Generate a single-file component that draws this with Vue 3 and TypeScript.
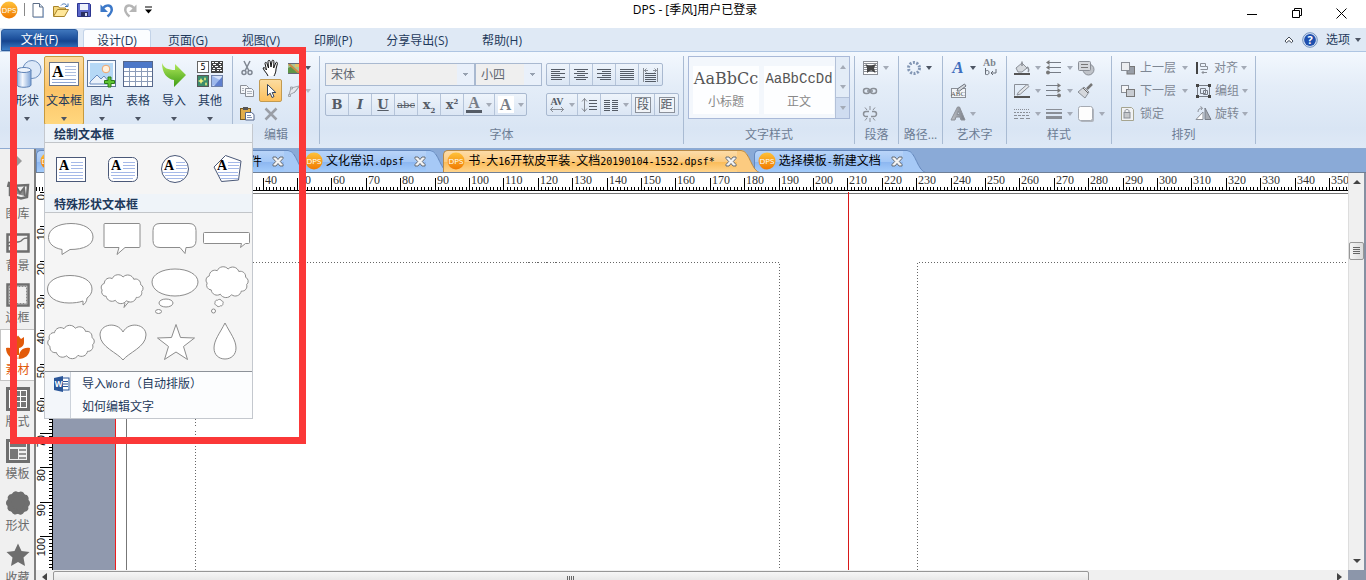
<script setup lang="ts">
import { computed, h, onBeforeUnmount, onMounted, ref } from 'vue'

interface Glyph { w: number; h: number; m: string }

const G = '#8a8f97'
const D = '#555c66'

const textPage = (x: number, y: number) =>
  `<text x="${x}" y="${y}" font-family="Liberation Serif, serif" font-weight="bold" font-size="14" fill="#000">A</text>`

const glyphs: Record<string, Glyph> = {
  dps: { w: 18, h: 18, m: `<defs><linearGradient id="dpsg" x1="0" y1="0" x2="0" y2="1"><stop offset="0" stop-color="#ffc23a"/><stop offset="1" stop-color="#f07a00"/></linearGradient></defs><circle cx="9" cy="9" r="8.500" fill="url(#dpsg)"/><text x="9" y="12" text-anchor="middle" font-family="Open Sans, sans-serif" font-size="8" fill="#fff">DPS</text>` },
  newdoc: { w: 16, h: 16, m: `<path d="M3 1.500h6.500l3.500 3.500v10H3z" fill="#fff" stroke="#5b6c86"/><path d="M9.500 1.500V5H13" fill="#dbe6f3" stroke="#5b6c86"/><path d="M13.500 6v9.500H4" fill="none" stroke="#8fa6c6"/>` },
  open: { w: 18, h: 16, m: `<path d="M1.500 14V4.500h5l1 1.500h6v2" fill="#f5d77a" stroke="#a8842a"/><path d="M1.500 14.500l4-7h11l-4 7z" fill="#ffe79a" stroke="#a8842a"/><path d="M9 3.500c2-2.500 5-2 6 .5M13 4.500h3V1.500" fill="none" stroke="#4778b8"/>` },
  save: { w: 16, h: 16, m: `<path d="M1.500 1.500h12l1 1v12h-13z" fill="#5a66c8" stroke="#2b3590"/><rect x="4" y="2" width="8" height="6" fill="#eef2fb"/><rect x="5" y="10" width="7" height="4.500" fill="#2b3060"/><rect x="9" y="11" width="2" height="3" fill="#d5dcf5"/>` },
  undo: { w: 16, h: 16, m: `<path d="M3 8C5 3 11 2 12.500 6c1 3-1 6-4 8.500" fill="none" stroke="#3c78c8" stroke-width="2.500"/><path d="M1.500 2.500V10H9z" fill="#3c78c8"/>` },
  redo: { w: 16, h: 16, m: `<path d="M13 8C11 3 5 2 3.500 6c-1 3 1 6 4 8.500" fill="none" stroke="#b5b5b5" stroke-width="2.500"/><path d="M14.500 2.500V10H7z" fill="#b5b5b5"/>` },
  custom: { w: 9, h: 8, m: `<path d="M1 1h7" stroke="#000"/><path d="M1 3.500h7L4.500 7.500z" fill="#000"/>` },
  min: { w: 10, h: 10, m: `<path d="M0 6.500h10" stroke="#000"/>` },
  restore: { w: 10, h: 10, m: `<path d="M.5 2.500h7v7h-7zM2.500 2V.5h7v7H8" fill="none" stroke="#000"/>` },
  close: { w: 11, h: 11, m: `<path d="M.5.5l10 10M10.500.5l-10 10" stroke="#000"/>` },
  fold: { w: 10, h: 8, m: `<path d="M1 5l4-4 4 4-1.500 1.700L5 4.500 2.500 6.700z" fill="#fff" stroke="#444c58"/>` },
  help: { w: 16, h: 16, m: `<circle cx="8" cy="8" r="7.300" fill="#dbe6f5" stroke="#6f8fbe"/><circle cx="8" cy="8" r="5.900" fill="#1f4fae"/><text x="8" y="12" text-anchor="middle" font-family="Open Sans, sans-serif" font-weight="bold" font-size="11" fill="#fff">?</text>` },
  shapes: { w: 30, h: 30, m: `<defs><linearGradient id="cylg"><stop offset="0" stop-color="#8fb2e0"/><stop offset=".4" stop-color="#f4f8fe"/><stop offset="1" stop-color="#7da3d6"/></linearGradient></defs><circle cx="20" cy="10.500" r="9" fill="#dbe8f8" stroke="#6d8fbe"/><path d="M5 11v15c0 3 14 3 14 0V11z" fill="url(#cylg)" stroke="#5f83b6"/><ellipse cx="12" cy="11" rx="7" ry="2.500" fill="#eef4fc" stroke="#5f83b6"/>` },
  textbox: { w: 32, h: 28, m: `<rect x="1.500" y="2.500" width="29" height="23" fill="#fff" stroke="#6b7486"/><text x="4" y="17" font-family="Liberation Serif, serif" font-weight="bold" font-size="16">A</text><path d="M17 6.500h11M17 9.500h11M17 12.500h11M17 15.500h11" stroke="#aebfe0"/><path d="M4 19.500h24M4 22.500h24" stroke="#8fa6d2"/>` },
  picture: { w: 32, h: 30, m: `<rect x="1.500" y="1.500" width="28" height="26" fill="#f7fafe" stroke="#5d7396"/><rect x="4" y="4" width="23" height="21" fill="#b5d8f6"/><circle cx="20" cy="10" r="3.800" fill="#fff1de" stroke="#efa56c"/><path d="M4 23l7-7 4 4 3-3 6 7v1H4z" fill="#eaf1fa" stroke="#6a8cc0"/><path d="M22 18h3v3.500h3.500v3H25V28h-3v-3.500h-3.500v-3H22z" fill="#5ec432" stroke="#2b7a18"/>` },
  table: { w: 32, h: 30, m: `<rect x="1.500" y="2.500" width="29" height="25" fill="#fff" stroke="#56678a"/><rect x="2" y="3" width="28" height="6" fill="#4d78c8"/><path d="M2 12.500h28M2 17.500h28M2 22.500h28M7.500 9v18M13.500 9v18M19.500 9v18M25.500 9v18" stroke="#8c9cb8"/>` },
  import: { w: 30, h: 30, m: `<defs><linearGradient id="impg" x1="0" y1="0" x2="0" y2="1"><stop offset="0" stop-color="#b4ea5c"/><stop offset="1" stop-color="#3c9c14"/></linearGradient></defs><path d="M3 4c2 5 6 7 13 7V5l11 11-12 12v-7C8 20 3 14 3 4z" fill="url(#impg)"/>` },
  other: { w: 28, h: 30, m: `<rect x="1.500" y="2.500" width="11" height="11" fill="#fff" stroke="#666"/><text x="7" y="11" text-anchor="middle" font-family="DejaVu Sans, sans-serif" font-size="8">5</text><rect x="15" y="2" width="12" height="12" fill="#444"/><path d="M16 3.500h2m1 0h3m2 0h2M17 5.500h3m3 0h2M16 7.500h1m2 0h3m2 0h2M17 9.500h2m2 0h4M16 11.500h3m2 0h2m1 0h2" stroke="#fff"/><rect x="1.500" y="16.500" width="11" height="11" fill="#3c8c6c" stroke="#555"/><path d="M4 21l1-2 1 2 2 1-2 1-1 2-1-2-2-1zM9 18l1 2-1 2-1-2zM10 23l1 2-1 2-1-2z" fill="#f3ef7a"/><rect x="15.500" y="16.500" width="11" height="11" fill="#d5e2fa" stroke="#7082a8"/><path d="M16 17l10 5-10 5z" fill="#9db8ec"/><path d="M26 18v9h-8z" fill="#5f7fce"/>` },
  cut: { w: 14, h: 16, m: `<path d="M4 1l5 10M10 1L5 11" stroke="#7f8792" stroke-width="1.500"/><circle cx="4" cy="12.500" r="2" fill="none" stroke="#7f8792" stroke-width="1.500"/><circle cx="10" cy="12.500" r="2" fill="none" stroke="#7f8792" stroke-width="1.500"/>` },
  hand: { w: 18, h: 18, m: `<path d="M6 17c-1-3-4-5-5-8 1-1 2 0 3.500 2L3 4.500C3 3 4.500 3 5 4.500L6.500 9 6 2.500C6 1 8 1 8.200 2.500L9 8l1-6c.3-1.300 2-1 1.900.5L11.700 9l2-5c.5-1.300 2-.8 1.700.6L14 10c0 3-1 5-2 7" fill="#fff" stroke="#111"/>` },
  stamp: { w: 14, h: 14, m: `<rect x="1" y="2" width="12" height="10" fill="#a7c596"/><path d="M1 12V7l4-2 4 4 4 3z" fill="#5e9648"/><path d="M2 3l10 9" stroke="#c98a45" stroke-width="2"/><rect x="8" y="3" width="4" height="3" fill="#e0c064"/><path d="M1 2.500h12M1 12.500h12" stroke="#667"/>` },
  copy: { w: 16, h: 14, m: `<path d="M1.500 1.500h6l2 2v6h-8z" fill="#f5f7fa" stroke="${G}"/><path d="M6.500 4.500h6l2 2v6h-8z" fill="#f5f7fa" stroke="${G}"/><path d="M8 7.500h5M8 9.500h5M3 4.500h2M3 6.500h2" stroke="#b0b5bd"/>` },
  cursor: { w: 14, h: 16, m: `<path d="M3.500 1.500v11l2.700-2.300 1.800 4.300 2-.9-1.800-4.100h3.600z" fill="#fff" stroke="#33445e"/>` },
  nodes: { w: 14, h: 14, m: `<path d="M2 11l2-7 8-2-4 6z" fill="#e6e9ee" stroke="#a0a5ad"/><path d="M1.500 12.500h2v-2h-2zM3.500 5h2V3h-2zM7 9l5-6" fill="#d5d9df" stroke="#a0a5ad"/>` },
  paste: { w: 16, h: 15, m: `<rect x="1.500" y="2.500" width="10" height="11" fill="#e0ad4c" stroke="#7a5c22"/><rect x="4" y="1" width="5" height="3" fill="#555"/><path d="M6.500 6.500h6l2.500 2v5.500H6.500z" fill="#fff" stroke="#53658a"/><path d="M8 9.500h4M8 11.500h5" stroke="#7a8cb0"/>` },
  del: { w: 14, h: 14, m: `<path d="M1.500 1.500l11 11M12.500 1.500l-11 11" stroke="#9a9ea6" stroke-width="2.500"/>` },
  al: { w: 17, h: 14, m: `<path d="M1 1.500h14M1 3.500h9M1 5.500h14M1 7.500h9M1 9.500h14M1 11.500h11" stroke="${D}"/>` },
  ac: { w: 17, h: 14, m: `<path d="M1 1.500h14M4 3.500h8M1 5.500h14M4 7.500h8M1 9.500h14M3 11.500h10" stroke="${D}"/>` },
  ar: { w: 17, h: 14, m: `<path d="M1 1.500h14M6 3.500h9M1 5.500h14M6 7.500h9M1 9.500h14M4 11.500h11" stroke="${D}"/>` },
  aj: { w: 17, h: 14, m: `<path d="M1 1.500h14M1 3.500h14M1 5.500h14M1 7.500h14M1 9.500h14M1 11.500h14" stroke="${D}"/>` },
  ad: { w: 17, h: 16, m: `<path d="M3 6.500h11M3 8.500h11M3 10.500h11M3 12.500h11M3 14.500h11" stroke="${D}"/><path d="M1.500 1v14M15.500 1v14M2 3.500h4M11 3.500h4M4.500 1.500l-2 2 2 2M12.500 1.500l2 2-2 2" fill="none" stroke="${G}"/>` },
  av: { w: 16, h: 16, m: `<text x="8" y="8" text-anchor="middle" font-family="Liberation Serif, serif" font-weight="bold" font-size="10" fill="${D}">AV</text><path d="M1 12.500h14M4 10l-2.500 2.500L4 15M12 10l2.500 2.500L12 15" fill="none" stroke="${G}"/>` },
  ls: { w: 17, h: 16, m: `<path d="M8 3.500h8M8 6.500h8M8 9.500h8M8 12.500h8" stroke="${D}"/><path d="M3.500 1v14M1 4.500L3.500 1.500 6 4.500M1 11.500L3.500 14.500 6 11.500" fill="none" stroke="${G}"/>` },
  cols: { w: 16, h: 14, m: `<path d="M1 2.500h6M9 2.500h6M1 4.500h6M9 4.500h6M1 6.500h6M9 6.500h6M1 8.500h6M9 8.500h6M1 10.500h6M9 10.500h6M1 12.500h6M9 12.500h6" stroke="${D}"/>` },
  wrap: { w: 17, h: 16, m: `<rect x="1" y="1" width="15" height="14" fill="#fff"/><path d="M1 1.500h15M1 3.500h15M1 5.500h15M1 7.500h15M1 9.500h15M1 11.500h15M1 14.500h15M1.500 1v14M15.500 1v14" stroke="#8b8f96"/><path d="M3.500 4l3 1.500h3L14 4l-2 4 1.500 5-4-2.500-2 .5L5 13V8z" fill="#444"/>` },
  link: { w: 16, h: 10, m: `<rect x="1.500" y="2.500" width="6" height="5" rx="2.500" fill="none" stroke="${G}" stroke-width="1.500"/><rect x="8.500" y="2.500" width="6" height="5" rx="2.500" fill="none" stroke="${G}" stroke-width="1.500"/><path d="M5 5h6" stroke="${G}" stroke-width="1.500"/>` },
  unlink: { w: 16, h: 16, m: `<path d="M7 5.500H4a2.500 2.500 0 0 0 0 5h2M9 10.500h3a2.500 2.500 0 0 0 0-5h-2" fill="none" stroke="${G}" stroke-width="1.500"/><path d="M3 1.500l2 2.500M8 0v4M13 1.500L11 4M3 14.500l2-2.500M8 16v-4M13 14.500L11 12" fill="none" stroke="${G}"/>` },
  path: { w: 16, h: 16, m: `<circle cx="8" cy="8" r="5.500" fill="none" stroke="#8296b4" stroke-width="3" stroke-dasharray="2 1.450"/>` },
  artA: { w: 16, h: 16, m: `<text x="8" y="13" text-anchor="middle" font-family="Liberation Serif, serif" font-weight="bold" font-style="italic" font-size="17" fill="#3f6fbe">A</text>` },
  ab: { w: 16, h: 18, m: `<text x="1" y="7" font-family="Liberation Serif, serif" font-weight="bold" font-size="10" fill="#7c828c">Ab</text><path d="M3.500 9v6.500M3.500 12.500c1-1.500 3.500-1.500 3.500 1s-2.500 2.500-3.500 1.500M14 10v4H9M11 12l-2 2 2 2" fill="none" stroke="#666c76"/>` },
  abc: { w: 18, h: 16, m: `<rect x="1.500" y="5.500" width="14" height="9" fill="#f2f4f7" stroke="${G}"/><text x="8" y="13" text-anchor="middle" font-family="Liberation Serif, serif" font-size="7" fill="#555">ABC</text><path d="M7 8l1-2.500L14.500 1l1.500 2-6.500 5z" fill="#d5d9df" stroke="#6d737d"/>` },
  artG: { w: 16, h: 16, m: `<defs><linearGradient id="artg" x1="0" y1="0" x2="1" y2="0"><stop offset="0" stop-color="#c2c5ca"/><stop offset="1" stop-color="#777c85"/></linearGradient></defs><path d="M1 14L7.500 1h2L15 14h-4l-1-3H6l-1 3zM7 8.500h2.500L8.300 5z" fill="url(#artg)" fill-rule="evenodd" stroke="#8c9098"/>` },
  bucket: { w: 18, h: 16, m: `<path d="M3 8l6-5 5 5-5 4H5z" fill="#d5d9de" stroke="${G}"/><path d="M9 6V1.500M14 7c2 1 2 4 1 5" fill="none" stroke="${G}" stroke-width="1.500"/><rect x="1" y="13" width="16" height="2" fill="#555"/>` },
  pen: { w: 18, h: 16, m: `<path d="M1.500 12.500v-11h14" fill="none" stroke="${G}"/><path d="M4 12l1.500-3L14 1.500 16 3.500 7.500 11z" fill="#e3e6ea" stroke="${G}"/><rect x="1" y="13" width="16" height="2" fill="#555"/>` },
  dashes: { w: 18, h: 14, m: `<path d="M1 2.500h16" stroke="${G}" stroke-dasharray="1 1"/><path d="M1 5.500h16" stroke="${G}" stroke-dasharray="2 1"/><path d="M1 8.500h16" stroke="${G}" stroke-dasharray="3 1"/><path d="M1 11.500h16" stroke="${G}" stroke-dasharray="4 2"/>` },
  arrL: { w: 18, h: 16, m: `<path d="M2 2.500h14M2 7.500h14M2 12.500h14" stroke="#777d87"/><path d="M1 2.500L4.500 0v5zM1 7.500L4.500 5v5z" fill="#777"/><circle cx="3" cy="12.500" r="2" fill="#777"/>` },
  arrR: { w: 18, h: 16, m: `<path d="M1 2.500h14M1 7.500h14M1 12.500h14" stroke="#777d87"/><path d="M16 2.500L12.500 0v5z" fill="#777"/><path d="M16 7.500L12.500 5v5z" fill="#777"/><circle cx="14" cy="12.500" r="2" fill="#777"/>` },
  lines: { w: 18, h: 14, m: `<path d="M1 2.500h16" stroke="${G}"/><path d="M1 6h16" stroke="${G}" stroke-width="2"/><path d="M1 10.500h16" stroke="${G}" stroke-width="3"/>` },
  shapeStack: { w: 18, h: 16, m: `<circle cx="11.500" cy="9.500" r="5.500" fill="#bfc3c9" stroke="${G}"/><rect x="1.500" y="1.500" width="12" height="9" rx="1" fill="#d5d8dd" stroke="${G}"/><path d="M4 4.500h7M4 7.500h7" stroke="#777"/>` },
  brush: { w: 16, h: 16, m: `<path d="M15 1l-5 5" stroke="#777" stroke-width="2.500"/><path d="M7 4l5 5-4 6-7-6z" fill="#d5d8dd" stroke="${G}"/><path d="M6 5l5 5" stroke="#666"/>` },
  card: { w: 18, h: 18, m: `<rect x="3" y="3" width="14" height="14" rx="2" fill="#b0b5bd"/><rect x="1.500" y="1.500" width="14" height="14" rx="2" fill="#fdfdfd" stroke="#a5aab2"/>` },
  up: { w: 16, h: 16, m: `<rect x="7" y="6.500" width="7.500" height="7.500" fill="#999fa8" stroke="#777"/><rect x="1.500" y="2.500" width="8" height="8" fill="#eceef1" stroke="${G}"/>` },
  down: { w: 16, h: 16, m: `<rect x="1.500" y="2.500" width="7" height="7" fill="#f4f5f7" stroke="${G}"/><rect x="6.500" y="6.500" width="8" height="7" fill="#c8ccd2" stroke="#777"/>` },
  lock: { w: 16, h: 16, m: `<path d="M1.500 1.500h10l2 2v11h-12z" fill="#f1f2f4" stroke="#a5a48f"/><path d="M5 6.500V5c0-2 4-2 4 0v1.500" fill="none" stroke="${G}"/><rect x="4" y="6.500" width="6" height="5.500" fill="#c5c7ca" stroke="${G}"/>` },
  align: { w: 16, h: 14, m: `<path d="M2 1v12" stroke="#444" stroke-width="2"/><path d="M5.500 2.500h5v3h-5zM5.500 8.500h7v-3h-2M7 11.500h5M8.500 10L7 11.500 8.500 13" fill="none" stroke="${G}"/>` },
  group: { w: 17, h: 16, m: `<path d="M2.500 2.500h12v11h-12zM5.500 5.500h5v5h-5zM8.500 7.500h4v4h-4z" fill="none" stroke="#777d87"/><path d="M1 1h3v3H1zM13 1h3v3h-3zM1 12h3v3H1zM13 12h3v3h-3z" fill="#444"/>` },
  rotate: { w: 17, h: 15, m: `<path d="M1 13.500h7V6z" fill="#fff" stroke="${G}"/><path d="M10 2v11.500h6z" fill="#a5aab2" stroke="#777d87"/><path d="M3 6c0-3 2-4 4-4M5.500.5L7.500 2 6 4" fill="none" stroke="${G}"/>` },
  word: { w: 17, h: 18, m: `<rect x="8" y="3" width="8" height="12" fill="#fff" stroke="#2a5699"/><path d="M10 6.500h5M10 9h5M10 11.500h5" stroke="#2a5699"/><path d="M1 3l9-2v16l-9-2z" fill="#2a5699"/><text x="5.500" y="12" text-anchor="middle" font-family="Open Sans, sans-serif" font-weight="bold" font-size="8" fill="#fff">W</text>` },
  x: { w: 12, h: 11, m: `<path d="M1 1h3l2 2.500L8 1h3v1.500L8.300 5.500 11 8.500V10H8L6 7.500 4 10H1V8.500l2.700-3L1 2.500z" fill="#f4f4f4" stroke="#666c75"/>` },
  lib: { w: 24, h: 22, m: `<path d="M2 7l1-4 5 1M4 6l18-1-1 12-6 1.500L4 15z" fill="none" stroke="#6e6e6e" stroke-width="2.500"/><path d="M7 13l4-5 3 5 4-5 1 8" fill="#8c8c8c" stroke="#6e6e6e" stroke-width="2"/>` },
  bg: { w: 24, h: 22, m: `<rect x="1.500" y="2.500" width="21" height="17" fill="none" stroke="#6e6e6e" stroke-width="2.500"/><path d="M2 11c7-4 9 1 13-2 3-3 4-3 7-3M2 14l6-1" fill="none" stroke="#6e6e6e" stroke-width="1.500"/>` },
  frame: { w: 24, h: 24, m: `<rect x="1.500" y="1.500" width="21" height="21" fill="none" stroke="#6e6e6e" stroke-width="2.500"/><rect x="3.500" y="3.500" width="17" height="17" fill="none" stroke="#8a8a8a" stroke-dasharray="2 1"/>` },
  tulip: { w: 24, h: 24, m: `<path d="M6 2l3 2 3-3.500L15 4l3-2v5c0 4-3 6-6 6S6 11 6 7z" fill="#e25a0a"/><path d="M0 13c7-1 11 2 11.500 11C5 24 0 20 0 13zM24 13c-7-1-11 2-11.500 11C19 24 24 20 24 13z" fill="#e25a0a"/><path d="M11 12h2v8h-2z" fill="#e25a0a"/>` },
  layout: { w: 24, h: 24, m: `<rect x="1.500" y="1.500" width="21" height="21" fill="#fff" stroke="#6e6e6e" stroke-width="3"/><path d="M4 4h5v5H4zM10 4h4v5h-4zM15 4h5v5h-5zM4 10h5v4H4zM10 10h4v4h-4zM15 10h5v4h-5zM4 15h5v5H4zM10 15h4v5h-4zM15 15h5v5h-5z" fill="#777"/>` },
  tpl: { w: 24, h: 24, m: `<rect x="1.500" y="1.500" width="21" height="21" fill="#f0f0f0" stroke="#6e6e6e" stroke-width="3"/><path d="M4 5h16v3H4zM4 10h8v10H4z" fill="#777"/><path d="M13 11h7M13 15h7M13 19h7" stroke="#777" stroke-width="1.500"/>` },
  blob: { w: 24, h: 24, m: `<circle cx="12" cy="12" r="11" fill="#6e6e6e"/><circle cx="12" cy="12" r="9" fill="none" stroke="#6e6e6e" stroke-width="6" stroke-linecap="round" stroke-dasharray="0.1 5.550"/>` },
  star: { w: 24, h: 24, m: `<path d="M12 .5l3.500 7.500 8 1-6 5.500L19 23l-7-4-7 4 1.500-8.500L.5 9l8-1z" fill="#6e6e6e"/>` },
  tbRect: { w: 32, h: 32, m: `<rect x="1.500" y="4.500" width="29" height="24" fill="#fff" stroke="#4a5878"/><path d="M16 9.500h12M16 12.500h12M16 15.500h12M4 19.500h24M4 22.500h24M4 25.500h24" stroke="#a5b9e8"/>${textPage(4, 17)}` },
  tbRound: { w: 32, h: 32, m: `<rect x="1.500" y="4.500" width="29" height="24" rx="5" fill="#fff" stroke="#4a5878"/><path d="M16 9.500h12M16 12.500h12M16 15.500h12M4 19.500h24M4 22.500h24M6 25.500h20" stroke="#a5b9e8"/>${textPage(4, 17)}` },
  tbCircle: { w: 32, h: 32, m: `<circle cx="16" cy="16" r="13.500" fill="#fff" stroke="#4a5878"/><path d="M17 9.500h9M17 12.500h11M17 15.500h11M4 19.500h24M6 22.500h20M8 25.500h16" stroke="#a5b9e8"/>${textPage(5, 17)}` },
  tbPenta: { w: 32, h: 32, m: `<path d="M14.500 2.500L30 8l-2.500 19-17 1.500L3 14z" fill="#fff" stroke="#4a5878"/><path d="M17 9.500h12M17 12.500h11M17 15.500h11M7 19.500h20M8 22.500h19M10 25.500h17" stroke="#a5b9e8"/>${textPage(6, 17)}` },
}

const Ico = (p: { n: string }) => {
  const g = glyphs[p.n]
  return h('svg', { width: g.w, height: g.h, viewBox: `0 0 ${g.w} ${g.h}`, overflow: 'visible', 'aria-hidden': 'true', innerHTML: g.m })
}
Ico.props = ['n']

/* Outlines on a 52 by 52 cell */
const cloud = (cx: number, cy: number, rx: number, ry: number, bumps: number) => {
  const pts = Array.from({ length: bumps }, (_, i) => {
    const a = (i / bumps) * Math.PI * 2 + 0.2
    return [cx + rx * Math.cos(a), cy + ry * Math.sin(a)]
  })
  const f = (n: number) => n.toFixed(1)
  return `M${f(pts[0][0])} ${f(pts[0][1])}` + pts.map((p, i) => {
    const q = pts[(i + 1) % bumps]
    const r = Math.hypot(q[0] - p[0], q[1] - p[1]) / 1.7
    return `A${f(r)} ${f(r)} 0 0 1 ${f(q[0])} ${f(q[1])}`
  }).join('') + 'z'
}
const callouts = [
  { name: '椭圆标注', d: 'M17 36.500C8 35 3.500 30 3.500 24.500 3.500 16 13 10.500 26 10.500s22 5.500 22 13.500-9 12.500-23 12.500l-8 5z' },
  { name: '矩形标注', d: 'M8 10.500h34a1 1 0 0 1 1 1v22a1 1 0 0 1-1 1H28l-8 7 2-7H8a1 1 0 0 1-1-1v-22a1 1 0 0 1 1-1z' },
  { name: '圆角标注', d: 'M11 10.500h29q7 0 7 7v10q0 7-7 7h-3l-1 6-5-6H11q-7 0-7-7v-10q0-7 7-7z' },
  { name: '长条标注', d: 'M3.500 19.500h44a1 1 0 0 1 1 1v9a1 1 0 0 1-1 1h-3l-5 4 1-4H3.500a1 1 0 0 1-1-1v-9a1 1 0 0 1 1-1z' },
  { name: '椭圆气泡', d: 'M38 36C34 37.500 29 38 24 38 11 38 2.500 32 2.500 24S12 10.500 25 10.500s22 5.500 22 13.500c0 4-2 7-5 9 0 3-2 6-4 7z' },
  { name: '云形气泡', d: cloud(25, 24, 20, 12, 11) + 'M28 38l-1 4.500 5-6' },
  { name: '椭圆思考', d: 'M3 17C3 9.500 13 4 26 4S49 9.500 49 17 39 31 26 31 3 25 3 17zM10 38a7 4 0 1 1 14 0 7 4 0 1 1-14 0M6.500 46.500a3 2 0 1 1 6 0 3 2 0 1 1-6 0' },
  { name: '云形思考', d: cloud(26, 17, 20, 13, 11) + cloud(18, 38, 4, 3, 6) + 'M10.500 46a2 2 0 1 1 4 0 2 2 0 1 1-4 0' },
  { name: '云形', d: cloud(26, 25, 22, 14, 12) },
  { name: '心形', d: 'M26 43C21 36 3 30 3 18 3 7 20 4 26 15 32 4 49 7 49 18c0 12-18 18-23 25z' },
  { name: '星形', d: 'M27 7.500l4.500 13 14 .5-11 8.500 4 13L27 35l-11.500 7.500 4-13-11-8.500 14-.5z' },
  { name: '水滴', d: 'M24 6c5 10 11 17 11 25 0 7-5 11-11 11s-11-4-11-11c0-8 6-15 11-25z' },
]
const boxes = [
  { n: 'tbRect', name: '矩形文本框' }, { n: 'tbRound', name: '圆角文本框' },
  { n: 'tbCircle', name: '圆形文本框' }, { n: 'tbPenta', name: '多边形文本框' },
]

const menus = ['页面(G)', '视图(V)', '印刷(P)', '分享导出(S)', '帮助(H)']
const quick = [
  { n: 'newdoc', t: '新建' }, { n: 'open', t: '打开' }, { n: 'save', t: '保存' }, { n: 'undo', t: '撤销' }, { n: 'redo', t: '重做' },
]
const bigTools = [
  { n: 'picture', t: '图片' }, { n: 'table', t: '表格' }, { n: 'import', t: '导入' }, { n: 'other', t: '其他' },
]
const editTools = [
  { n: 'cut', t: '剪切' }, { n: 'hand', t: '移动' }, { n: 'stamp', t: '图像', arr: 'dark' },
  { n: 'copy', t: '复制' }, { n: 'cursor', t: '选择', on: true }, { n: 'nodes', t: '节点', arr: 'pale' },
  { n: 'paste', t: '粘贴' }, { n: 'del', t: '删除' },
]
const aligns = [{ n: 'al', t: '左对齐' }, { n: 'ac', t: '居中' }, { n: 'ar', t: '右对齐' }, { n: 'aj', t: '两端对齐' }, { n: 'ad', t: '分散对齐' }]
const styleTools = [
  { n: 'bucket', t: '填充', arr: true }, { n: 'arrL', t: '起点箭头', arr: true }, { n: 'shapeStack', t: '形状效果' },
  { n: 'pen', t: '线条颜色', arr: true }, { n: 'arrR', t: '终点箭头', arr: true }, { n: 'brush', t: '格式刷' },
  { n: 'dashes', t: '线型', arr: true }, { n: 'lines', t: '线宽', arr: true }, { n: 'card', t: '阴影', arr: true },
]
const arrange = [
  { n: 'up', t: '上一层', arr: true }, { n: 'align', t: '对齐', arr: true },
  { n: 'down', t: '下一层', arr: true }, { n: 'group', t: '编组', arr: true },
  { n: 'lock', t: '锁定' }, { n: 'rotate', t: '旋转', arr: true },
]
const side = [
  { n: 'lib', t: '图库' }, { n: 'bg', t: '背景' }, { n: 'frame', t: '边框' }, { n: 'tulip', t: '素材' },
  { n: 'layout', t: '版式' }, { n: 'tpl', t: '模板' }, { n: 'blob', t: '形状' }, { n: 'star', t: '收藏' },
]
const docs = [
  { t: '件', wide: true }, { t: '文化常识.dpsf' },
  { t: '书-大16开软皮平装-文档20190104-1532.dpsf*' }, { t: '选择模板-新建文档' },
]
const activeDoc = ref(2)
const activeSide = ref(3)

const runs = (s: string) => (s.match(/[\x20-\x7e]+|[^\x20-\x7e]+/g) ?? []).map(t => ({ t, lat: t.charCodeAt(0) < 127 }))

/* Rulers: millimetres to pixels, drawn as far as the window reaches */
const MM = 3.44
const at = (origin: number, mm: number) => Math.round(origin + mm * MM)
const size = ref({ w: window.innerWidth, h: window.innerHeight })
const measure = () => { size.value = { w: window.innerWidth, h: window.innerHeight } }
onMounted(() => window.addEventListener('resize', measure))
onBeforeUnmount(() => window.removeEventListener('resize', measure))

const ticks = (from: number, to: number, origin: number, vertical: boolean) => {
  let d = ''
  for (let mm = from; mm <= to; mm++) {
    const p = at(origin, mm)
    const l = mm % 10 === 0 ? 13 : 4
    d += vertical ? `M${17 - l} ${p + 0.5}h${l}` : `M${p + 0.5} ${18 - l}v${l}`
  }
  return d
}
const mmAcross = computed(() => Math.floor((size.value.w - 150) / MM))
const mmDown = computed(() => Math.floor((size.value.h - 204) / MM))
const hTicks = computed(() => ticks(-26, mmAcross.value + 5, 89, false))
const vTicks = computed(() => ticks(0, mmDown.value + 5, 0, true))
const tens = (max: number) => Array.from({ length: Math.floor(max / 10) + 1 }, (_, i) => i * 10)
const hTens = computed(() => tens(mmAcross.value))
const vTens = computed(() => tens(mmDown.value))
</script>

<template>
  <div class="app">
    <header class="titlebar">
      <div class="quick">
        <Ico n="dps" class="logo" />
        <span class="bar"></span>
        <button v-for="q in quick" :key="q.n" type="button" :aria-label="q.t"><Ico :n="q.n" /></button>
        <button type="button" class="slim" aria-label="自定义"><Ico n="custom" /></button>
      </div>
      <h1>DPS - [季风]用户已登录</h1>
      <div class="win">
        <button type="button" aria-label="最小化"><Ico n="min" /></button>
        <button type="button" aria-label="还原"><Ico n="restore" /></button>
        <button type="button" aria-label="关闭"><Ico n="close" /></button>
      </div>
    </header>

    <nav class="menubar">
      <button type="button" class="file">文件(F)</button>
      <button type="button" class="current">设计(D)</button>
      <button v-for="m in menus" :key="m" type="button">{{ m }}</button>
      <div class="options">
        <button type="button" aria-label="折叠功能区"><Ico n="fold" /></button>
        <button type="button" aria-label="帮助"><Ico n="help" /></button>
        <button type="button">选项<i class="arr dark"></i></button>
      </div>
    </nav>

    <section class="ribbon">
      <div class="group insert">
        <button type="button" class="big"><Ico n="shapes" /><span>形状</span><i class="arr dark"></i></button>
        <div class="drop">
          <button type="button" class="big on"><Ico n="textbox" /><span>文本框</span><i class="arr dark"></i></button>
          <div class="popover">
            <h2>绘制文本框</h2>
            <div class="cells boxes">
              <button v-for="b in boxes" :key="b.n" type="button" :aria-label="b.name"><Ico :n="b.n" /></button>
            </div>
            <h2>特殊形状文本框</h2>
            <div class="cells">
              <button v-for="c in callouts" :key="c.name" type="button" :aria-label="c.name">
                <svg width="52" height="52" viewBox="0 0 52 52"><path :d="c.d" fill="#fff" stroke="#8c8c8c" /></svg>
              </button>
            </div>
            <div class="links">
              <button type="button"><span class="gut"><Ico n="word" /></span><span>导入<span class="lat">Word</span>（自动排版）</span></button>
              <button type="button"><span class="gut"></span><span>如何编辑文字</span></button>
            </div>
          </div>
        </div>
        <button v-for="b in bigTools" :key="b.n" type="button" class="big"><Ico :n="b.n" /><span>{{ b.t }}</span><i class="arr dark"></i></button>
      </div>

      <div class="group edit">
        <div class="grid">
          <button v-for="e in editTools" :key="e.n" type="button" class="tool" :class="{ on: e.on }" :aria-label="e.t">
            <Ico :n="e.n" /><i v-if="e.arr" class="arr" :class="e.arr"></i>
          </button>
        </div>
        <h3>编辑</h3>
      </div>

      <div class="group font">
        <div class="rows">
          <div class="line">
            <select class="face" aria-label="字体"><option>宋体</option></select>
            <select class="size" aria-label="字号"><option>小四</option></select>
            <div class="set">
              <button v-for="a in aligns" :key="a.n" type="button" :aria-label="a.t"><Ico :n="a.n" /></button>
            </div>
          </div>
          <div class="line">
            <div class="set letters">
              <button type="button"><b>B</b></button>
              <button type="button"><b><em>I</em></b></button>
              <button type="button"><b><u>U</u></b></button>
              <button type="button" class="small"><s>abc</s></button>
              <button type="button"><b>x<sub>2</sub></b></button>
              <button type="button"><b>x<sup>2</sup></b></button>
              <button type="button" class="wide"><span class="ink">A</span><i class="arr"></i></button>
              <button type="button" class="wide"><span class="paper">A</span><i class="arr"></i></button>
            </div>
            <div class="set">
              <button type="button" class="wide" aria-label="字间距"><Ico n="av" /><i class="arr"></i></button>
              <button type="button" aria-label="行距"><Ico n="ls" /></button>
              <button type="button" class="wide" aria-label="分栏"><Ico n="cols" /><i class="arr"></i></button>
              <button type="button"><span class="boxed">段</span></button>
              <button type="button"><span class="boxed">距</span></button>
            </div>
          </div>
        </div>
        <h3>字体</h3>
      </div>

      <div class="group styles">
        <div class="gallery">
          <button type="button" class="card head"><span>AaBbCc</span><small>小标题</small></button>
          <button type="button" class="card body"><span>AaBbCcDd</span><small>正文</small></button>
          <div class="scroll">
            <button type="button" aria-label="向上"><i class="arr upw"></i></button>
            <button type="button" aria-label="向下"><i class="arr"></i></button>
            <button type="button" aria-label="更多" class="more"><i class="arr"></i></button>
          </div>
        </div>
        <h3>文字样式</h3>
      </div>

      <div class="group para">
        <div class="stack">
          <button type="button" class="tool" aria-label="环绕"><Ico n="wrap" /><i class="arr"></i></button>
          <button type="button" class="tool" aria-label="链接"><Ico n="link" /></button>
          <button type="button" class="tool" aria-label="取消链接"><Ico n="unlink" /></button>
        </div>
        <h3>段落</h3>
      </div>

      <div class="group para">
        <div class="stack">
          <button type="button" class="tool" aria-label="路径文字"><Ico n="path" /><i class="arr dark"></i></button>
        </div>
        <h3>路径...</h3>
      </div>

      <div class="group art">
        <div class="stack two">
          <button type="button" class="tool" aria-label="艺术字"><Ico n="artA" /><i class="arr dark"></i></button>
          <button type="button" class="tool" aria-label="竖排"><Ico n="ab" /></button>
          <button type="button" class="tool" aria-label="编辑艺术字"><Ico n="abc" /></button>
          <span></span>
          <button type="button" class="tool" aria-label="艺术字效果"><Ico n="artG" /><i class="arr"></i></button>
        </div>
        <h3>艺术字</h3>
      </div>

      <div class="group look">
        <div class="stack three">
          <button v-for="s in styleTools" :key="s.n" type="button" class="tool" :aria-label="s.t"><Ico :n="s.n" /><i v-if="s.arr" class="arr"></i></button>
        </div>
        <h3>样式</h3>
      </div>

      <div class="group arrange">
        <div class="stack pair">
          <button v-for="a in arrange" :key="a.n" type="button" class="tool"><Ico :n="a.n" /><span>{{ a.t }}</span><i v-if="a.arr" class="arr"></i></button>
        </div>
        <h3>排列</h3>
      </div>
    </section>

    <main class="main">
      <aside class="side">
        <button type="button" class="expand" aria-label="展开"><i></i></button>
        <button v-for="(s, i) in side" :key="s.n" type="button" class="item" :class="{ on: i === activeSide }" @click="activeSide = i">
          <span class="pic"><Ico :n="s.n" /></span><span>{{ s.t }}</span>
        </button>
      </aside>

      <div class="work">
        <div class="tabs">
          <div v-for="(d, i) in docs" :key="d.t" class="tab" :class="{ on: i === activeDoc, wide: d.wide }">
            <svg class="cap" width="24" height="23" viewBox="0 0 24 23" aria-hidden="true">
              <path class="fill" d="M0 0h4C13 0 14 22 24 23H0z" /><path class="edge" d="M0 .5h4C13 .5 14 22 24 23" />
            </svg>
            <button type="button" class="name" @click="activeDoc = i">
              <Ico n="dps" />
              <span class="title"><span v-for="(r, k) in runs(d.t)" :key="k" :class="{ lat: r.lat }">{{ r.t }}</span></span>
            </button>
            <button type="button" class="shut" aria-label="关闭标签"><Ico n="x" /></button>
          </div>
        </div>

        <div class="ruler-h">
          <svg width="100%" height="19">
            <path :d="hTicks" stroke="#000" shape-rendering="crispEdges" />
            <line x1="16" y1="17.500" x2="100%" y2="17.500" stroke="#000" />
            <text v-for="t in hTens" :key="t" :x="at(89, t) + 2" y="11">{{ t }}</text>
          </svg>
        </div>
        <div class="ruler-v">
          <svg width="17" height="100%">
            <path :d="vTicks" stroke="#000" shape-rendering="crispEdges" />
            <line x1="16.500" y1="0" x2="16.500" y2="100%" stroke="#000" />
            <text v-for="t in vTens" :key="t" :transform="`translate(9 ${at(0, t) + 2}) rotate(-90)`" text-anchor="end">{{ t }}</text>
          </svg>
        </div>
        <div class="canvas">
          <svg width="100%" height="100%" shape-rendering="crispEdges">
            <rect width="100%" height="100%" fill="#9099ae" />
            <rect x="63" width="100%" height="100%" fill="#fff" />
            <path d="M0 1.500h9999M73.500 1v9999" stroke="#777" />
            <rect x="62" width="1" height="100%" fill="#ee1c1c" />
            <rect x="795" width="1" height="100%" fill="#d81818" />
            <path d="M142.500 70.500v9999M142.500 70.500h584v9999M864.500 9999v-9928.500h9999" fill="none" stroke="#666" stroke-dasharray="1 2" />
          </svg>
        </div>
        <div class="vscroll">
          <i class="tri n"></i>
          <span class="thumb"><i></i></span>
          <i class="tri s"></i>
        </div>
        <div class="hscroll">
          <i class="tri w"></i><span class="thumb"><i></i></span><i class="tri e"></i>
        </div>
        <div class="corner"></div>
      </div>
    </main>

    <div class="marker" aria-hidden="true"></div>
  </div>
</template>

<style>
html, body { margin: 0; overflow: hidden; }
</style>

<style scoped>
.app {
  position: relative; display: flex; flex-direction: column; height: 100vh; overflow: hidden; background: #fff;
  font: 12px/16px "Open Sans", "Noto Sans CJK SC", sans-serif; color: #1e395b;
}
.app * { box-sizing: border-box; }
button { display: flex; align-items: center; justify-content: center; padding: 0; border: 0; background: none; font: inherit; color: inherit; white-space: nowrap; }
svg { display: block; flex: none; }
h1, h2, h3 { margin: 0; font: inherit; }
.arr { flex: none; width: 0; height: 0; border: 3px solid transparent; border-top: 4px solid #a4abb7; border-bottom: 0; }
.arr.dark { border-top-color: #4d5564; }
.arr.pale { border-top-color: #b4bac4; }
.arr.upw { border-top: 0; border-bottom: 4px solid #a4abb7; }
.lat { font: 10px/16px "DejaVu Sans Mono", monospace; }

.titlebar { display: flex; flex: none; height: 28px; color: #000; }
.quick { display: flex; align-items: center; width: 161px; height: 19px; }
.logo { margin-right: 6px; }
.bar { width: 1px; height: 13px; margin-right: 1px; background: #888; }
.quick button { width: 23px; }
.quick button.slim { width: 14px; }
.titlebar h1 { flex: 1; padding-top: 2px; text-align: center; }
.win { display: flex; height: 26px; padding-right: 2px; }
.win button { width: 45px; }

.menubar { display: flex; flex: none; height: 24px; border-bottom: 1px solid #aec5e2; background: #dfe9f5; }
.menubar > button { padding: 2px 17px 0; }
.menubar > .file { width: 77px; margin: 1px 5px 0 1px; border: 1px solid #2a5a9c; border-radius: 3px 3px 0 0; background: linear-gradient(#3f77bd, #1c4f9b 45%, #17458e 55%, #3d80c9); color: #fff; padding: 0; }
.menubar > .current { width: 68px; margin-top: 1px; border: 1px solid #c3d3e8; border-bottom: 0; border-radius: 3px 3px 0 0; background: #fbfdff; padding: 0; }
.options { display: flex; align-items: center; gap: 8px; margin-left: auto; padding-right: 5px; }
.options button { gap: 5px; }

.ribbon { display: flex; flex: none; height: 97px; padding: 4px 0 5px; border-bottom: 1px solid #8fabd2; background: linear-gradient(#f3f8fe, #e4edf8 35%, #d9e5f4 80%, #dfe9f6); }
.group { display: flex; flex: none; flex-direction: column; height: 88px; border-right: 1px solid #a9bbd3; }
.group h3 { margin-top: auto; height: 18px; line-height: 18px; text-align: center; color: #6d7d94; }
.insert { flex-direction: row; width: 233px; padding-left: 10px; }
.big { flex-direction: column; justify-content: flex-start; width: 36px; height: 69px; padding-top: 3px; }
.big:first-child { width: 34px; }
.big svg { height: 30px; }
.big span { margin: 4px 0 8px; }
.drop .big.on { width: 40px; border: 1px solid #c79a3e; border-radius: 2px; background: linear-gradient(#fbdca0, #fcc468 50%, #ffd77e); padding-top: 2px; }
.drop { position: relative; }

.popover { position: absolute; z-index: 20; top: 68px; left: 0; width: 209px; border: 1px solid #c4c8ce; border-top: 0; background: #f5f5f5; }
.popover h2 { height: 19px; padding: 3px 0 0 9px; border-bottom: 1px solid #c2c5c9; background: #eff4f9; font-weight: bold; line-height: 15px; }
.cells { display: grid; grid-template-columns: repeat(4, 52px); }
.cells.boxes { height: 51px; }
.links { margin-top: 2px; border-top: 1px solid #8d9299; background: #fcfdfe; }
.links button { justify-content: flex-start; width: 100%; height: 23px; gap: 11px; }
.links button > span:last-child { padding-top: 1px; }
.gut { display: flex; align-items: center; justify-content: flex-end; width: 26px; height: 23px; border-right: 1px solid #ccd2da; background: #f3f6fa; }

.edit { width: 87px; }
.grid { display: grid; grid-template: repeat(3, 23px) / 24px 24px 32px; margin-left: 2px; }
.tool { gap: 4px; color: #7e8794; }
.tool.on { width: 23px; border: 1px solid #c29a50; border-radius: 2px; background: linear-gradient(#fbdca0, #fdc05c); }
.edit .tool { height: 23px; }

.font { width: 364px; }
.rows { display: flex; flex-direction: column; gap: 7px; padding: 7px 4px 0 5px; }
.line { display: flex; }
select { height: 23px; border: 1px solid #a9b9d0; border-radius: 0; appearance: none; padding: 0 5px; font: inherit; color: #5f6670;
  background: linear-gradient(#97a1b0, #97a1b0) right 6px top 9px / 5px 1px no-repeat, linear-gradient(#97a1b0, #97a1b0) right 7px top 10px / 3px 1px no-repeat, linear-gradient(#97a1b0, #97a1b0) right 8px top 11px / 1px 1px no-repeat, linear-gradient(90deg, #efefef, #efefef) left / calc(100% - 17px) 100% no-repeat, #e9f0fa; }
.face { width: 150px; }
.size { width: 67px; margin-right: 4px; }
.set { display: flex; height: 23px; border: 1px solid #a9b9d0; border-radius: 2px; background: linear-gradient(#eef4fb, #dbe6f4); }
.set button { width: 23px; border-right: 1px solid #b5c4d9; }
.set button.wide { width: 31px; gap: 4px; }
.set button:last-child { border-right: 0; }
.letters { margin-right: 19px; font: 14px/16px "DejaVu Serif", serif; color: #555c66; }
.letters b { font-size: 13px; }
.letters sub, .letters sup { font-size: 7px; line-height: 0; }
.letters .small { font-size: 10px; }
.ink, .paper { font: bold 16px/14px "Liberation Serif", serif; color: #777d87; }
.ink { height: 17px; border-bottom: 3px solid #555c66; padding: 0 2px; }
.paper { width: 16px; height: 17px; background: #fff; line-height: 17px; }
.boxed { width: 16px; height: 16px; border: 1px solid #8b919b; background: #f1f4f8; line-height: 14px; color: #555c66; }

.styles { width: 171px; padding: 0 4px; }
.gallery { display: flex; height: 63px; border: 1px solid #a9b9d8; background: #f3f7fc; }
.card { flex-direction: column; justify-content: flex-start; width: 66px; margin: 9px 0 4px 4px; background: #fdfeff; }
.card + .card { width: 70px; margin-left: 5px; }
.card span { height: 28px; line-height: 26px; color: #555; }
.card small { font-size: 12px; color: #888; }
.head span { font-family: "DejaVu Serif", serif; font-size: 16px; }
.body span { font-family: "Liberation Mono", monospace; font-size: 14px; }
.scroll { display: flex; flex-direction: column; width: 14px; margin-left: auto; border-left: 1px solid #b3c1d8; background: #e3ecf7; }
.scroll button { flex: 1; }
.scroll .more { border-top: 1px solid #b3c1d8; background: #cfdcf0; }

.stack { display: grid; grid-template-rows: repeat(3, 23px); padding-left: 7px; }
.stack .tool { justify-content: flex-start; height: 23px; }
.para { width: 44px; }
.para h3 { white-space: nowrap; }
.art { width: 64px; }
.two { grid-template-columns: 32px 20px; }
.look { width: 105px; }
.three { grid-template-columns: repeat(3, 32px); padding-left: 6px; }
.arrange { width: 144px; }
.pair { grid-template-columns: 75px 60px; padding-left: 8px; }
.pair .tool span { margin-right: 2px; }
.pair .tool:nth-child(even) { gap: 3px; }
.pair .tool:nth-child(even) span { margin-right: 0; }

.main { display: flex; flex: 1; min-height: 0; }
.side { flex: none; width: 36px; border-right: 2px solid #808080; background: #f0f0f0; overflow: hidden; color: #6a6a6a; }
.expand { width: 34px; height: 24px; padding-left: 4px; }
.expand i { border: 6px solid transparent; border-left: 6px solid #999; border-right: 0; }
.item { flex-direction: column; justify-content: flex-start; width: 34px; height: 52px; border: 1px solid transparent; border-right: 0; padding-top: 4px; }
.item.on { border-color: #c4c4c4; background: #fff; color: #e25a0a; }
.pic { display: flex; align-items: center; height: 26px; margin-bottom: 2px; }

.work { display: grid; flex: 1; min-width: 0; grid-template: 24px 19px 1fr 10px / 17px 1fr 18px; }
.tabs { display: flex; grid-column: 1 / -1; border-bottom: 1px solid #6f7f96; background: #8aaad7; color: #000; overflow: hidden; }
.tab { position: relative; display: flex; align-items: center; flex: none; margin: 1px -7px 0 0; padding: 0 24px 0 4px; }
.tab::before { content: ""; position: absolute; inset: 0 24px 0 0; border: 1px solid #6689bd; border-right: 0; border-bottom: 0; border-radius: 5px 0 0 0; background: linear-gradient(#b9d4f8, #a3c7f6 50%, #8cb6f0 52%, #a4ccfb); }
.tab .cap { position: absolute; top: 0; right: 0; }
.fill { fill: #a6c9f6; }
.edge { fill: none; stroke: #6689bd; }
.tab.on { z-index: 2; }
.tab.on::before { border-color: #b78a48; background: linear-gradient(#fddca8, #fccb80 50%, #fabb58 52%, #ffd48c); }
.on .fill { fill: #fccb80; }
.on .edge { stroke: #b78a48; }
.name, .shut { position: relative; }
.name { gap: 3px; }
.title { display: block; padding-top: 1px; }
.wide .title { width: 201px; text-align: right; }
.shut { margin-left: 10px; }
.ruler-h { grid-column: 1 / 3; overflow: hidden; }
.ruler-h text { font: 12px "Liberation Serif", serif; fill: #333; }
.ruler-v { min-height: 0; overflow: hidden; }
.ruler-v text { font: 11px "Liberation Sans", sans-serif; fill: #111; }
.canvas { min-width: 0; min-height: 0; overflow: hidden; }
.vscroll { display: flex; flex-direction: column; align-items: center; grid-column: 3; grid-row: 2 / 4; border-right: 2px solid #8590a2; border-left: 1px solid #ddd; background: #f0f0f0; padding: 7px 0; }
.tri { width: 0; height: 0; border: 4px solid transparent; }
.tri.n { border-top: 0; border-bottom-color: #444; }
.tri.s { margin-top: auto; border-bottom: 0; border-top-color: #444; }
.tri.w { border-left: 0; border-right: 5px solid #444; margin: 3px 6px 0 6px; }
.tri.e { border-right: 0; border-left: 5px solid #444; margin: 3px 6px 0 auto; }
.thumb { display: flex; align-items: center; justify-content: center; border: 1px solid #979797; border-radius: 2px; background: linear-gradient(90deg, #f5f5f5, #dcdcdc); }
.vscroll .thumb { width: 15px; height: 18px; margin-top: 58px; }
.vscroll .thumb i { width: 7px; height: 8px; background: repeating-linear-gradient(#666 0 1px, transparent 1px 2px); }
.hscroll { display: flex; grid-column: 1 / 3; background: #f0f0f0; overflow: hidden; }
.hscroll .thumb { align-items: flex-start; width: 79%; height: 17px; margin-top: 1px; padding-top: 4px; background: linear-gradient(#f6f6f6, #dcdcdc); }
.hscroll .thumb i { width: 8px; height: 8px; background: repeating-linear-gradient(90deg, #666 0 1px, transparent 1px 2px); }
.corner { background: #8c96aa; }

.marker { position: absolute; z-index: 30; top: 47px; left: 10px; width: 296px; height: 397px; border: 7px solid #fb3838; pointer-events: none; }
</style>
